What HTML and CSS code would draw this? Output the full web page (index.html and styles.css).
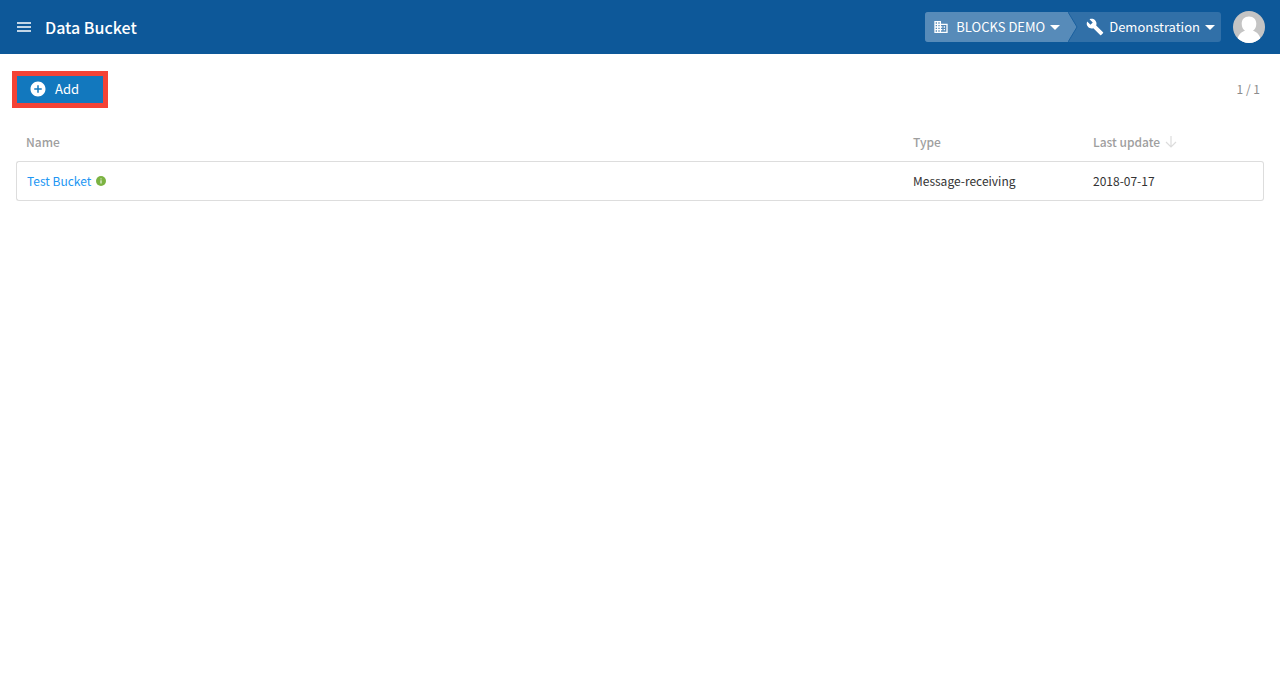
FILE: index.html
```html
<!DOCTYPE html>
<html lang="en">
<head>
<meta charset="utf-8">
<title>Data Bucket</title>
<link rel="stylesheet" href="styles.css">
</head>
<body>
<header class="topbar">
  <button class="menu-button" type="button" aria-label="Menu">
    <svg width="14" height="10" viewBox="0 0 14 10" fill="none" stroke="currentColor" stroke-width="1.4"><path d="M0 1h14M0 5h14M0 9h14"/></svg>
  </button>
  <h1 class="title">Data Bucket</h1>
  <nav class="switcher" aria-label="Organization and project">
    <button class="switch organization" type="button">
      <svg class="organization-icon" width="16" height="16" viewBox="0 0 24 24" fill="currentColor"><path d="M12 7V3H2v18h20V7H12zM6 19H4v-2h2v2zm0-4H4v-2h2v2zm0-4H4V9h2v2zm0-4H4V5h2v2zm4 12H8v-2h2v2zm0-4H8v-2h2v2zm0-4H8V9h2v2zm0-4H8V5h2v2zm10 12h-8v-2h2v-2h-2v-2h2v-2h-2V9h8v10zm-2-8h-2v2h2v-2zm0 4h-2v2h2v-2z"/></svg>
      <span>BLOCKS DEMO</span>
      <svg class="caret" width="10" height="5" viewBox="0 0 10 5" fill="currentColor"><path d="M0 0h10L5 5z"/></svg>
    </button>
    <svg class="chevron" width="10" height="30" viewBox="0 0 10 30"><path d="M0 0L9 15 0 30z" fill="#578bb9"/><path d="M0 0L9 15 0 30" fill="none" stroke="#1a609e"/></svg>
    <button class="switch project" type="button">
      <svg width="18" height="18" viewBox="0 0 24 24" fill="currentColor"><path d="M22.7 19l-9.1-9.1c.9-2.3.4-5-1.5-6.9-2-2-5-2.4-7.4-1.3L9 6 6 9 1.6 4.7C.4 7.1.9 10.1 2.9 12.1c1.9 1.9 4.6 2.4 6.9 1.5l9.1 9.1c.4.4 1 .4 1.4 0l2.3-2.3c.5-.4.5-1.1.1-1.4z"/></svg>
      <span>Demonstration</span>
      <svg class="caret" width="10" height="5" viewBox="0 0 10 5" fill="currentColor"><path d="M0 0h10L5 5z"/></svg>
    </button>
  </nav>
  <button class="avatar" type="button" aria-label="Account">
    <svg width="32" height="32" viewBox="0 0 32 32"><path d="M0 0h32v32H0z" fill="#c4c4c4"/><path d="M16 5.500c4.600 0 7.300 3.100 7.300 7.200 0 3-1.300 5.700-3.300 7.100 3.800 1.200 6.800 4.200 7.500 8.200V32h-23v-4c.7-4 3.700-7 7.500-8.200-2-1.400-3.300-4.100-3.300-7.100 0-4.100 2.700-7.200 7.300-7.200z" fill="#fff"/></svg>
  </button>
</header>
<main class="content">
  <div class="toolbar">
    <button class="add-button" type="button">
      <svg width="18" height="18" viewBox="0 0 24 24" fill="currentColor"><path d="M12 2C6.480 2 2 6.480 2 12s4.480 10 10 10 10-4.480 10-10S17.520 2 12 2zm5 11h-4v4h-2v-4H7v-2h4V7h2v4h4v2z"/></svg>
      <span>Add</span>
    </button>
    <span class="pager">1 / 1</span>
  </div>
  <table class="buckets">
    <thead>
      <tr>
        <th scope="col">Name</th>
        <th scope="col" class="col-type">Type</th>
        <th scope="col" class="col-update"><span class="sorted">Last update
          <svg width="12" height="12" viewBox="0 0 12 12" fill="none" stroke="#dcdcdc" stroke-width="1.200"><path d="M6 0v11M1 6l5 5 5-5"/></svg></span></th>
      </tr>
    </thead>
    <tbody>
      <tr>
        <td><span class="name"><a href="#bucket">Test Bucket</a>
          <svg width="10" height="10" viewBox="0 0 10 10"><circle cx="5" cy="5" r="5" fill="#7cb342"/><path d="M5 4.300V7.500M5 2.400V3.400" stroke="#fff" stroke-width="1"/></svg></span></td>
        <td>Message-receiving</td>
        <td>2018-07-17</td>
      </tr>
    </tbody>
  </table>
</main>
</body>
</html>
```
FILE: styles.css
```css
* {
  box-sizing: border-box;
}

body {
  margin: 0;
  background: #fff;
  color: #333;
  font: 12px/20px "Noto Sans CJK JP", "Noto Sans", sans-serif;
}

button {
  border: 0;
  padding: 0;
  background: none;
  color: inherit;
  font: inherit;
  cursor: pointer;
}

svg {
  display: block;
  flex: none;
}

.topbar {
  display: flex;
  align-items: center;
  height: 54px;
  padding: 0 15px 0 17px;
  background: #0d5899;
  color: #fff;
}

.menu-button {
  margin-right: 14px;
}

.title {
  margin: 0;
  font-size: 16px;
  font-weight: 500;
  line-height: 24px;
}

.switcher {
  display: flex;
  height: 30px;
  margin-left: auto;
  border-radius: 3px;
  background: #3170a8;
  overflow: hidden;
}

.switch {
  display: flex;
  align-items: center;
  gap: 5px;
  font-size: 13px;
}

.organization {
  padding: 0 8px;
  background: #578bb9;
}

.organization-icon {
  margin-right: 2px;
}

.project {
  padding: 0 6px 0 8px;
}

.avatar {
  margin-left: 12px;
  border-radius: 50%;
  overflow: hidden;
}

.content {
  padding: 17px 16px 0 12px;
}

.toolbar {
  display: flex;
  align-items: center;
  justify-content: space-between;
  padding-right: 4px;
}

.add-button {
  display: flex;
  align-items: center;
  gap: 8px;
  width: 96px;
  height: 37px;
  padding: 0 0 1px 12px;
  border: 5px solid #f44336;
  background: #1278be;
  color: #fff;
  font-size: 13px;
}

.pager {
  padding-bottom: 2px;
  color: #8c8c8c;
}

.buckets {
  width: calc(100% - 4px);
  margin: 16px 0 0 4px;
  border-spacing: 0;
  table-layout: fixed;
}

.buckets th {
  height: 37px;
  padding: 0 10px 2px;
  color: #9e9e9e;
  font-weight: 500;
  text-align: left;
}

.buckets td {
  height: 40px;
  padding: 0 10px;
  border: solid #ddd;
  border-width: 1px 0;
}

.buckets td:first-child {
  border-left-width: 1px;
  border-radius: 3px 0 0 3px;
}

.buckets td:last-child {
  border-right-width: 1px;
  border-radius: 0 3px 3px 0;
}

.buckets .col-type {
  width: 180px;
}

.buckets .col-update {
  width: 181px;
}

.sorted,
.name {
  display: flex;
  align-items: center;
  gap: 5px;
}

.name a {
  color: #2196f3;
  text-decoration: none;
}
```
